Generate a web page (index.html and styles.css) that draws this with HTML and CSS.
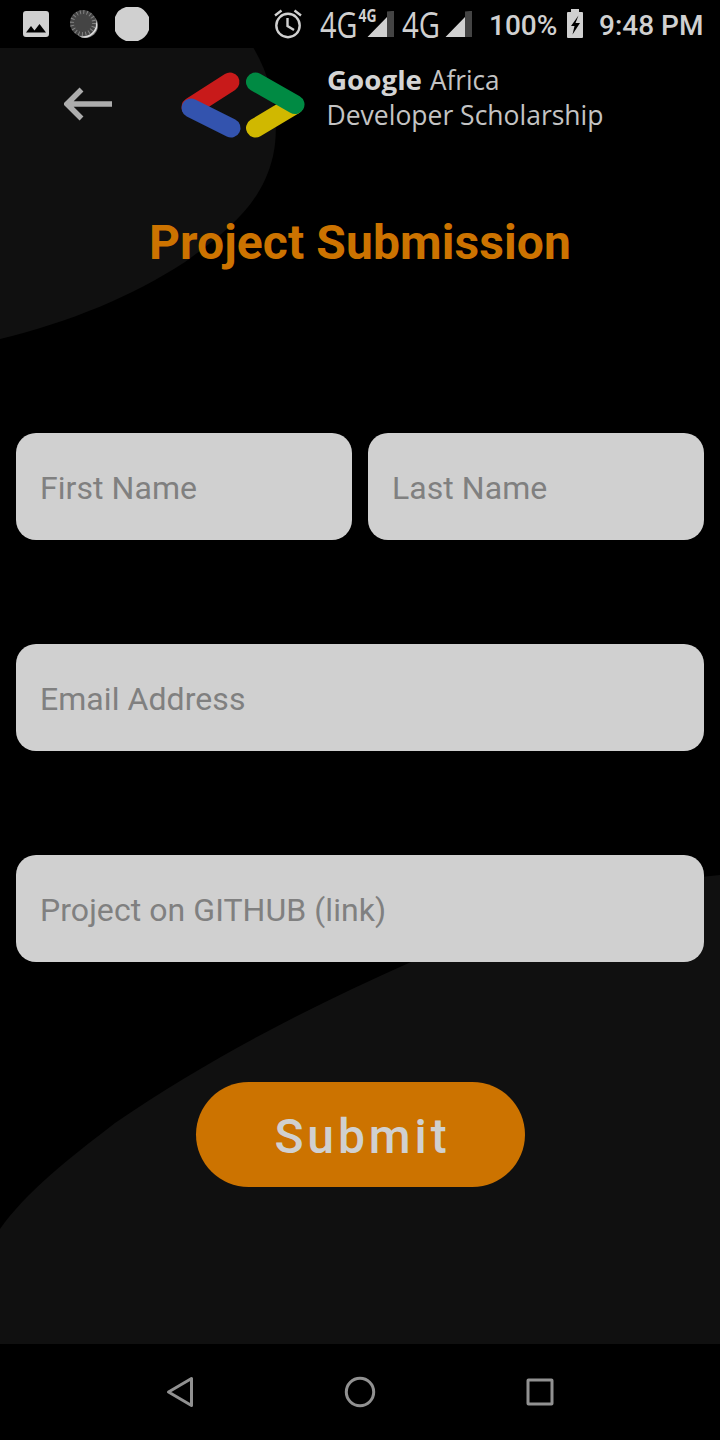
FILE: index.html
```html
<!DOCTYPE html>
<html lang="en">
<head>
<meta charset="utf-8">
<title>Project Submission</title>
<link rel="stylesheet" href="styles.css">
</head>
<body>
<div class="phone">
  <header class="status">
    <svg class="status-left" width="160" height="48" viewBox="0 0 160 48">
      <path fill="#d0d0d0" fill-rule="evenodd" d="M26 11H46Q49 11 49 14V34Q49 37 46 37H26Q23 37 23 34V14Q23 11 26 11ZM26 32.500H46L39.500 24L34.500 30.500L31 26Z"/>
      <circle cx="85.500" cy="25.500" r="12.500" fill="#777"/>
      <path d="M96 20A12.500 12.500 0 0 1 79 36.200A14 14 0 0 0 96 20" fill="#ddd"/>
      <circle cx="83" cy="23" r="13" fill="#444"/>
      <circle cx="83" cy="23" r="11" fill="none" stroke="#858585" stroke-width="4" stroke-dasharray="1 2.456"/>
      <path fill="#d0d0d0" d="M126 7H138Q144 8 149 17V30Q146 38 138 41H126Q118 38 115 31V17Q118 9 126 7Z"/>
    </svg>
    <div class="status-right">
      <svg width="216" height="48" viewBox="260 0 216 48">
        <g fill="none" stroke="#d0d0d0" stroke-width="2.400"><circle cx="288" cy="25.500" r="11.700"/><path d="M287.500 18V26L294 30M275 15.500L281.500 10.500M294.500 10.500L301 15.500"/></g>
        <g class="signal-text"><text x="320" y="38" font-size="36" textLength="37.500" lengthAdjust="spacingAndGlyphs">4G</text><text class="signal-small" x="358.500" y="22" font-size="17.500" textLength="18" lengthAdjust="spacingAndGlyphs">4G</text><text x="402" y="38" font-size="36" textLength="38" lengthAdjust="spacingAndGlyphs">4G</text></g>
        <path fill="#444" d="M387 18V11.500L392 11H394V37H387ZM465 18V11.500L470 11H472V37H465Z"/>
        <path fill="#d0d0d0" d="M387 17V37H367.500ZM465 17V37H445.500Z"/>
      </svg>
      <span class="battery-level">100%</span>
      <svg class="battery" width="16" height="30" viewBox="0 0 16 30"><path fill="#d0d0d0" fill-rule="evenodd" d="M4 1H12V4H15Q16 4 16 5V29Q16 30 15 30H1Q0 30 0 29V5Q0 4 1 4H4ZM11.500 7.500L4 18H7.500L5.500 26.500L13 15H8.500Z"/></svg>
      <span class="clock">9:48 PM</span>
    </div>
  </header>

  <main class="screen">
    <svg class="backdrop" width="720" height="1296" viewBox="0 48 720 1296">
      <path d="M0 48H253.500C274 83 280 124 273 156C262 203 230 229 185 262C133 296 70 322 0 339Z"/>
      <path d="M0 1229C26 1192 67 1160 115 1123C205 1061 307 1008 411 962C505 922 604 885 720 875V1344H0Z"/>
    </svg>
    <div class="toolbar">
      <svg class="back" width="48" height="34" viewBox="0 0 48 34"><path d="M48 17H4M17.500 2.500L3 17L17.500 31.500" fill="none" stroke="#adadad" stroke-width="5.500"/></svg>
      <svg class="logo" width="430" height="70" viewBox="180 70 430 70">
        <g fill="none" stroke-width="19" stroke-linecap="round">
          <path stroke="#c81a1a" d="M191 107L230 82"/>
          <path stroke="#3353ae" d="M191 108L231 128"/>
          <path stroke="#d0b800" d="M255.500 128L294 105"/>
          <path stroke="#008a43" d="M255.500 82L295 104.500"/>
        </g>
        <g class="logo-text">
          <text class="logo-bold" x="327" y="90.300" textLength="95" lengthAdjust="spacingAndGlyphs">Google</text>
          <text x="430" y="90.300" textLength="69.500" lengthAdjust="spacingAndGlyphs">Africa</text>
          <text x="326.500" y="124.500" textLength="277" lengthAdjust="spacingAndGlyphs">Developer Scholarship</text>
        </g>
      </svg>
    </div>
    <h1 class="title">Project Submission</h1>
    <form class="form">
      <div class="row">
        <input class="field" type="text" placeholder="First Name">
        <input class="field" type="text" placeholder="Last Name">
      </div>
      <input class="field" type="email" placeholder="Email Address">
      <input class="field" type="url" placeholder="Project on GITHUB (link)">
      <button class="submit" type="button">Submit</button>
    </form>
  </main>

  <nav class="navbar">
    <svg viewBox="0 0 40 40"><path d="M31.500 6.500V33.500L8.500 20Z"/></svg>
    <svg viewBox="0 0 40 40"><circle cx="20" cy="20" r="13.700"/></svg>
    <svg viewBox="0 0 40 40"><rect x="8" y="8" width="24" height="24" rx=".5"/></svg>
  </nav>
</div>
</body>
</html>
```
FILE: styles.css
```css
* { box-sizing: border-box; }
body { margin: 0; background: #000; font-family: Roboto, sans-serif; }
.phone { width: 720px; height: 1440px; display: flex; flex-direction: column; overflow: hidden; }

.status { height: 48px; flex: none; display: flex; justify-content: space-between; color: #d0d0d0; }
.status svg { display: block; flex: none; }
.status-right { display: flex; width: 460px; font-size: 28px; line-height: 51px; font-weight: 500; white-space: nowrap; }
.battery-level { margin-left: 13px; width: 78px; }
.battery { margin-top: 8px; }
.clock { margin-left: 16px; }
.signal-text { fill: #d0d0d0; font-family: "Open Sans", sans-serif; font-weight: 400; }
.signal-small { font-weight: 700; }

.screen { position: relative; height: 1296px; flex: none; display: flex; flex-direction: column; }
.backdrop { position: absolute; inset: 0; z-index: -1; fill: #101010; }
.toolbar { height: 112px; display: flex; align-items: flex-start; padding: 22px 0 0 64px; }
.back { margin-top: 17px; }
.logo { margin-left: 68px; overflow: visible; }
.logo-text { fill: #c4c4c4; font-family: "Open Sans", sans-serif; font-size: 27px; }
.logo-bold { fill: #d4d4d4; font-weight: 700; }
.title { margin: 55px 0 0; font-size: 48px; line-height: 56px; font-weight: 700; letter-spacing: .1px; text-align: center; color: #cc7300; }

.form { display: flex; flex-direction: column; gap: 104px; padding: 162px 16px 0; }
.row { display: grid; grid-template-columns: 1fr 1fr; gap: 16px; }
.field { width: 100%; height: 107px; padding: 3px 24px 0; border: 0; border-radius: 20px; background: #d0d0d0; color: #222; font: 400 32px Roboto, sans-serif; letter-spacing: .06px; outline: 0; }
.field::placeholder { color: #808080; opacity: 1; }
.submit { align-self: center; width: 329px; height: 105px; margin: 16px 0 0 1px; padding: 4px 0 0 4px; border: 0; border-radius: 53px; background: #cc7300; color: #d0d0d0; font: 500 48px Roboto, sans-serif; letter-spacing: 3.900px; }

.navbar { height: 96px; flex: none; display: flex; justify-content: center; align-items: center; gap: 140px; background: #000; }
.navbar svg { width: 40px; height: 40px; fill: none; stroke: #919191; stroke-width: 3; stroke-linejoin: round; }
```
